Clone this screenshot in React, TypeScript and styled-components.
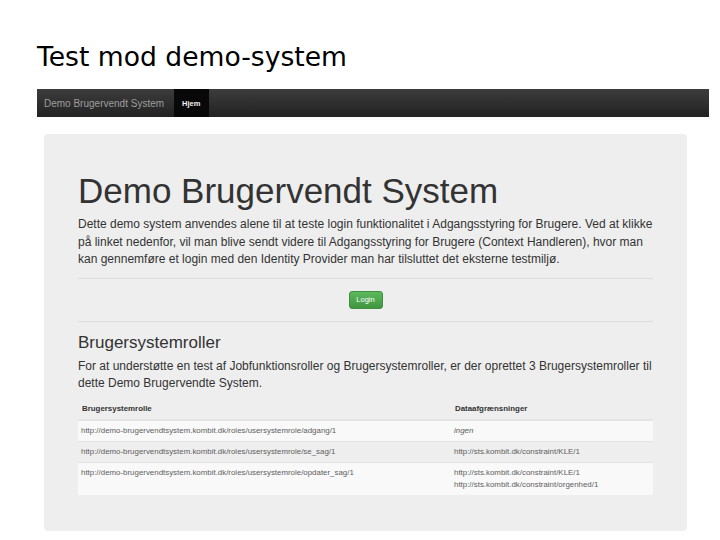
import styled, { createGlobalStyle } from "styled-components";

const GlobalStyle = createGlobalStyle`
  html, body {
    margin: 0;
    padding: 0;
    background: #ffffff;
  }
`;

const roles = [
  {
    role: "http://demo-brugervendtsystem.kombit.dk/roles/usersystemrole/adgang/1",
    limits: ["ingen"],
    italic: true,
  },
  {
    role: "http://demo-brugervendtsystem.kombit.dk/roles/usersystemrole/se_sag/1",
    limits: ["http://sts.kombit.dk/constraint/KLE/1"],
  },
  {
    role: "http://demo-brugervendtsystem.kombit.dk/roles/usersystemrole/opdater_sag/1",
    limits: [
      "http://sts.kombit.dk/constraint/KLE/1",
      "http://sts.kombit.dk/constraint/orgenhed/1",
    ],
  },
];

export default function App() {
  return (
    <Slide>
      <GlobalStyle />
      <SlideTitle>Test mod demo-system</SlideTitle>
      <Navbar>
        <Brand>Demo Brugervendt System</Brand>
        <NavItem $active>Hjem</NavItem>
      </Navbar>
      <Jumbotron>
        <H1>Demo Brugervendt System</H1>
        <Lead>
          Dette demo system anvendes alene til at teste login funktionalitet i
          Adgangsstyring for Brugere. Ved at klikke på linket nedenfor, vil man
          blive sendt videre til Adgangsstyring for Brugere (Context
          Handleren), hvor man kan gennemføre et login med den Identity
          Provider man har tilsluttet det eksterne testmiljø.
        </Lead>
        <Rule $top={9} />
        <ButtonRow>
          <LoginButton>Login</LoginButton>
        </ButtonRow>
        <Rule $top={10} />
        <H2>Brugersystemroller</H2>
        <Lead>
          For at understøtte en test af Jobfunktionsroller og
          Brugersystemroller, er der oprettet 3 Brugersystemroller til dette
          Demo Brugervendte System.
        </Lead>
        <Table>
          <thead>
            <tr>
              <Th>Brugersystemrolle</Th>
              <Th>Dataafgrænsninger</Th>
            </tr>
          </thead>
          <tbody>
            {roles.map((r, i) => (
              <Row key={r.role} $striped={i % 2 === 0}>
                <Td>{r.role}</Td>
                <Td $italic={r.italic}>
                  {r.limits.map((l) => (
                    <div key={l}>{l}</div>
                  ))}
                </Td>
              </Row>
            ))}
          </tbody>
        </Table>
      </Jumbotron>
    </Slide>
  );
}

const Slide = styled.div`
  width: 720px;
  height: 540px;
  overflow: hidden;
  padding: 38px 11px 0 37px;
  box-sizing: border-box;
`;

const SlideTitle = styled.h1`
  margin: 0 0 13px;
  font-family: "DejaVu Sans", sans-serif;
  font-weight: normal;
  font-size: 26.6px;
  line-height: 38px;
  color: #000;
`;

const Navbar = styled.div`
  display: flex;
  align-items: stretch;
  height: 28px;
  background: linear-gradient(to bottom, #3c3c3c, #222222);
  font-family: "Liberation Sans", Arial, sans-serif;
`;

const Brand = styled.div`
  display: flex;
  align-items: center;
  padding: 0 10px 0 7px;
  font-size: 10px;
  color: #9d9d9d;
`;

const NavItem = styled.div<{ $active?: boolean }>`
  display: flex;
  align-items: center;
  padding: 0 8px 0 8px;
  min-width: 19px;
  font-size: 7.5px;
  font-weight: bold;
  color: #f2f2f2;
  background: ${(p) => (p.$active ? "#080808" : "transparent")};
`;

const Jumbotron = styled.div`
  margin: 17px 0 0 7px;
  width: 643px;
  height: 397px;
  box-sizing: border-box;
  padding: 38px 34px 0;
  background: #eeeeee;
  border-radius: 4px;
  font-family: "Liberation Sans", Arial, sans-serif;
  color: #333;
`;

const H1 = styled.h1`
  margin: 0 0 6px;
  font-size: 35px;
  font-weight: normal;
  line-height: 38px;
  color: #333;
`;

const Lead = styled.p`
  margin: 0;
  font-size: 12px;
  line-height: 17.5px;
  color: #333;
`;

const Rule = styled.hr<{ $top: number }>`
  margin: ${(p) => p.$top}px 0 10px;
  border: 0;
  border-top: 1px solid #dcdcdc;
`;

const ButtonRow = styled.div`
  display: flex;
  justify-content: center;
  padding: 2px 0;
`;

const LoginButton = styled.button`
  width: 34px;
  height: 18px;
  padding: 0;
  border: 1px solid #3e8f3e;
  border-radius: 3px;
  background: linear-gradient(to bottom, #5cb85c, #419641);
  color: #fff;
  font-family: "Liberation Sans", Arial, sans-serif;
  font-size: 7.5px;
`;

const H2 = styled.h2`
  margin: 9px 0 4px;
  font-size: 17px;
  font-weight: normal;
  line-height: 22px;
  color: #333;
`;

const Table = styled.table`
  margin-top: 8px;
  width: 100%;
  border-collapse: collapse;
  font-size: 7.9px;
  color: #5e5e5e;
`;

const Th = styled.th`
  text-align: left;
  font-weight: bold;
  color: #333;
  padding: 2px 4px 4px;
  line-height: 12px;
  border-bottom: 2px solid #e4e4e4;
  &:first-child {
    width: 365px;
  }
`;

const Row = styled.tr<{ $striped: boolean }>`
  background: ${(p) => (p.$striped ? "#f9f9f9" : "transparent")};
  border-top: 1px solid #e4e4e4;
`;

const Td = styled.td<{ $italic?: boolean }>`
  vertical-align: top;
  padding: 4px 3px;
  line-height: 12px;
  font-style: ${(p) => (p.$italic ? "italic" : "normal")};
`;
